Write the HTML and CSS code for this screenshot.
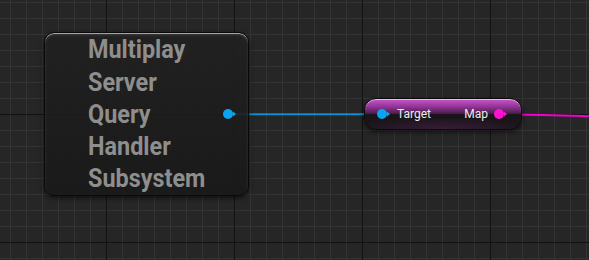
FILE: index.html
```html
<!DOCTYPE html>
<html lang="en">
<head>
<meta charset="UTF-8">
<meta name="viewport" content="width=device-width, initial-scale=1.0">
<title>Blueprint Graph</title>
<link rel="stylesheet" href="styles.css">
</head>
<body>

<div class="graph">

    <!-- WIRES -->
    <svg class="wires" width="589" height="260" viewBox="0 0 589 260">
        <path d="M230 114.3 L378 114.3" stroke="#0b8fd2" stroke-width="2" fill="none"/>
        <path d="M504 114.5 C540 114.5 560 115.3 589 116.3" stroke="#f000c8" stroke-width="2" fill="none"/>
    </svg>

    <!-- SELF NODE -->
    <div class="node node-self">
        <div class="self-title">Multiplay<br>Server<br>Query<br>Handler<br>Subsystem</div>
        <svg class="pin" width="14" height="10" viewBox="0 0 14 10">
            <circle cx="5" cy="5" r="5" fill="#0aa5f2"/>
            <path d="M10 2.5 L13 5 L10 7.5 Z" fill="#0aa5f2"/>
        </svg>
    </div>

    <!-- COMPACT NODE -->
    <div class="node node-compact">
        <div class="pin-group">
            <svg class="pin" width="14" height="10" viewBox="0 0 14 10">
                <circle cx="5" cy="5" r="5" fill="#0aa5f2"/>
                <path d="M10 2.5 L13 5 L10 7.5 Z" fill="#0aa5f2"/>
            </svg>
            <span class="pin-label">Target</span>
        </div>
        <div class="pin-group">
            <span class="pin-label">Map</span>
            <svg class="pin" width="14" height="10" viewBox="0 0 14 10">
                <circle cx="5" cy="5" r="5" fill="#ff12cf"/>
                <path d="M10 2.5 L13 5 L10 7.5 Z" fill="#ff12cf"/>
            </svg>
        </div>
    </div>

</div>

</body>
</html>
```

FILE: styles.css
```css
:root {
    --bg: #262626;
    --minor: #343434;
    --major: #121212;
}
body {
    margin: 0;
    background: var(--bg);
    font-family: Roboto, "Liberation Sans", sans-serif;
}
.graph {
    position: relative;
    width: 589px;
    height: 260px;
    overflow: hidden;
    background-color: var(--bg);
    background-image:
        linear-gradient(to right, var(--major) 1px, transparent 1px),
        linear-gradient(to bottom, var(--major) 1px, transparent 1px),
        linear-gradient(to right, var(--minor) 1px, transparent 1px),
        linear-gradient(to bottom, var(--minor) 1px, transparent 1px);
    background-size: 128px 128px, 128px 128px, 16px 16px, 16px 16px;
    background-position: 106px 0, 0 114px, 10px 0, 0 2px;
}
.wires {
    position: absolute;
    left: 0;
    top: 0;
}
.node {
    position: absolute;
    box-sizing: border-box;
    border: 1px solid #0a0a0a;
    box-shadow: 0 2px 5px rgba(0,0,0,0.6);
}

/* self node */
.node-self {
    left: 44px;
    top: 32px;
    width: 205px;
    height: 164px;
    border-radius: 10px;
    background: linear-gradient(to bottom, rgba(32,32,32,0.88), rgba(24,24,24,0.88));
    box-shadow: inset 0 1px 0 rgba(255,255,255,0.55), inset 0 2px 3px rgba(255,255,255,0.12), 0 2px 5px rgba(0,0,0,0.6);
    display: flex;
    align-items: center;
    justify-content: space-between;
    padding: 0 11px 0 43px;
}
.self-title {
    font-size: 26px;
    line-height: 32.3px;
    font-weight: bold;
    color: #8e8e8e;
    transform: scaleX(0.9);
    transform-origin: left center;
}

/* compact node */
.node-compact {
    left: 364px;
    top: 98px;
    width: 158px;
    height: 32px;
    border-radius: 12px;
    background:
        radial-gradient(ellipse 60% 40% at 50% 100%, rgba(140,40,140,0.3), transparent),
        linear-gradient(to bottom, #c957c9 0%, #93359a 25%, #4a1f4a 48%, #1a141a 52%, #161616 100%);
    box-shadow: inset 0 1px 0 rgba(255,255,255,0.6), 0 2px 5px rgba(0,0,0,0.6);
    display: flex;
    align-items: center;
    justify-content: space-between;
    padding: 0 13px 0 12px;
}
.pin-group {
    display: flex;
    align-items: center;
    gap: 6px;
}
.pin { display: block; }
.pin-label {
    font-size: 12px;
    color: #ececec;
}
```
